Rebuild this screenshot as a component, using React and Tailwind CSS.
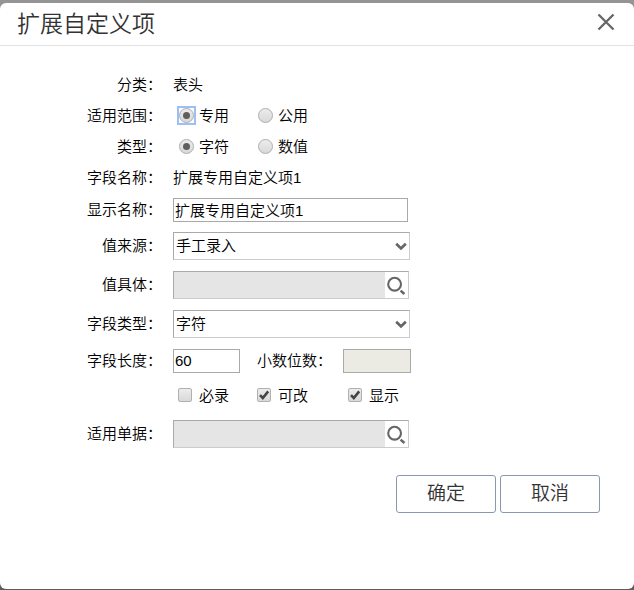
import React, { useState } from 'react';

const Row = ({ label, htmlFor, children }) => (
    <div className="flex items-center">
        <label htmlFor={htmlFor} className="w-[162px] shrink-0 text-right">{label}：</label>
        <div className="flex min-w-0 items-center pl-[11px]">{children}</div>
    </div>
);

const Radio = ({ name, text, checked, onChange, focused }) => (
    <label className="flex h-5 items-start gap-[5px]">
        <span className={`mt-0.5 grid size-[15px] place-items-center ${focused ? 'outline-2 outline-[#9dbff8]' : ''}`}>
            <input
                type="radio"
                name={name}
                checked={checked}
                onChange={onChange}
                className="col-start-1 row-start-1 size-[15px] appearance-none rounded-full border border-[#adadad] bg-linear-to-b from-[#ececec] to-[#d9d9d9] outline-none"
            />
            {checked && <span className="pointer-events-none col-start-1 row-start-1 size-[7px] rounded-full bg-[#5f5f5f]" />}
        </span>
        {text}
    </label>
);

const Checkbox = ({ text, defaultChecked }) => (
    <label className="flex h-5 items-start gap-[7px]">
        <span className="mt-0.5 grid size-3.5 place-items-center">
            <input
                type="checkbox"
                defaultChecked={defaultChecked}
                className="peer col-start-1 row-start-1 size-3.5 appearance-none rounded-[2px] border border-[#b0b0b0] bg-linear-to-b from-[#ececec] to-[#d9d9d9]"
            />
            <svg viewBox="0 0 14 14" className="pointer-events-none invisible col-start-1 row-start-1 size-3.5 peer-checked:visible">
                <path d="M3 7.2 L5.8 10 L11.2 3.4" fill="none" stroke="#444" strokeWidth="2.6" />
            </svg>
        </span>
        {text}
    </label>
);

const SelectBox = ({ id, options }) => (
    <div className="grid h-7 w-[237px] items-center">
        <select
            id={id}
            className="col-start-1 row-start-1 h-7 w-full appearance-none border border-t-[#a9a9a9] border-r-[#ccc] border-b-[#ccc] border-l-[#a9a9a9] bg-white pl-0.5"
        >
            {options.map((o) => <option key={o}>{o}</option>)}
        </select>
        <svg viewBox="0 0 12 10" className="pointer-events-none col-start-1 row-start-1 mr-[3px] h-2.5 w-3 justify-self-end">
            <path d="M1.2 2.8 L6 7.4 L10.8 2.8" fill="none" stroke="#666" strokeWidth="2.8" />
        </svg>
    </div>
);

const SearchBox = ({ id }) => (
    <div className="flex h-7 w-[236px] border border-t-[#a9a9a9] border-r-[#ccc] border-b-[#ccc] border-l-[#a9a9a9]">
        <input id={id} type="text" readOnly className="min-w-0 flex-1 bg-[#e5e5e5] px-0.5 outline-none" />
        <button type="button" aria-label="查找" className="grid w-[23px] place-items-center bg-white">
            <svg viewBox="0 0 20 20" className="size-5" fill="none" stroke="#666">
                <circle cx="7.6" cy="9.2" r="6.4" strokeWidth="2.1" />
                <path d="M13.6 15.6 L17.4 19" strokeWidth="2.5" />
            </svg>
        </button>
    </div>
);

const App = () => {
    const [scope, setScope] = useState('专用');
    const [type, setType] = useState('字符');

    return (
        <div className="flex min-h-screen flex-col bg-linear-to-b from-[#959595] to-[#5d5d5f] pt-[3px] pb-px font-['Liberation_Sans','Noto_Sans_CJK_SC',sans-serif] text-[15px] leading-5 font-[350] text-black">
            <div role="dialog" aria-labelledby="dialog-title" className="flex-1 rounded-md bg-white">
                <header className="flex h-[43px] items-center justify-between border-b border-[#e2e2e2] pr-[19px] pl-[17px]">
                    <h1 id="dialog-title" className="text-[23px] leading-8 font-[350] text-[#333]">扩展自定义项</h1>
                    <button type="button" aria-label="关闭" className="pb-1">
                        <svg viewBox="0 0 18 18" className="size-[18px]" fill="none" stroke="#666" strokeWidth="2.3">
                            <path d="M1.5 1.5 L16.5 16.5 M16.5 1.5 L1.5 16.5" />
                        </svg>
                    </button>
                </header>

                <form onSubmit={(e) => e.preventDefault()} className="pt-[29px]">
                    <div className="flex flex-col gap-[11px]">
                        <Row label="分类">表头</Row>
                        <Row label="适用范围">
                            <div className="flex gap-[29px] pl-1.5">
                                <Radio name="scope" text="专用" checked={scope === '专用'} onChange={() => setScope('专用')} focused={scope === '专用'} />
                                <Radio name="scope" text="公用" checked={scope === '公用'} onChange={() => setScope('公用')} focused={scope === '公用'} />
                            </div>
                        </Row>
                        <Row label="类型">
                            <div className="flex gap-[29px] pl-1.5">
                                <Radio name="type" text="字符" checked={type === '字符'} onChange={() => setType('字符')} />
                                <Radio name="type" text="数值" checked={type === '数值'} onChange={() => setType('数值')} />
                            </div>
                        </Row>
                        <Row label="字段名称">扩展专用自定义项1</Row>
                    </div>

                    <div className="mt-2.5 flex flex-col gap-2.5">
                        <Row label="显示名称" htmlFor="displayName">
                            <input id="displayName" type="text" defaultValue="扩展专用自定义项1" className="h-6 w-[235px] border border-[#a9a9a9] px-px pb-0.5" />
                        </Row>
                        <Row label="值来源" htmlFor="source">
                            <SelectBox id="source" options={['手工录入']} />
                        </Row>
                    </div>

                    <div className="mt-[11px] flex flex-col gap-[11px]">
                        <Row label="值具体" htmlFor="detail">
                            <SearchBox id="detail" />
                        </Row>
                        <Row label="字段类型" htmlFor="fieldType">
                            <SelectBox id="fieldType" options={['字符']} />
                        </Row>
                        <Row label="字段长度" htmlFor="fieldLength">
                            <input id="fieldLength" type="text" defaultValue="60" className="h-6 w-[67px] border border-[#a9a9a9] px-px pb-0.5" />
                            <label htmlFor="decimals" className="pr-[11px] pl-[17px]">小数位数：</label>
                            <input id="decimals" type="text" disabled className="h-6 w-[68px] border border-[#a9a9a9] bg-[#ebebe4] px-px pb-0.5" />
                        </Row>
                    </div>

                    {/* Flags */}
                    <div className="mt-[13px] mb-3.5 flex pl-[178px]">
                        <div className="flex gap-7 pr-10">
                            <Checkbox text="必录" />
                            <Checkbox text="可改" defaultChecked />
                        </div>
                        <Checkbox text="显示" defaultChecked />
                    </div>

                    <Row label="适用单据" htmlFor="bills">
                        <SearchBox id="bills" />
                    </Row>

                    <div className="mt-[27px] flex justify-end gap-1 pr-[34px] text-[19px] text-[#333]">
                        <button type="submit" className="h-[38px] w-[100px] rounded-[3px] border border-[#8898b0]">确定</button>
                        <button type="button" className="h-[38px] w-[100px] rounded-[3px] border border-[#8898b0]">取消</button>
                    </div>
                </form>
            </div>
        </div>
    );
};

export default App;
